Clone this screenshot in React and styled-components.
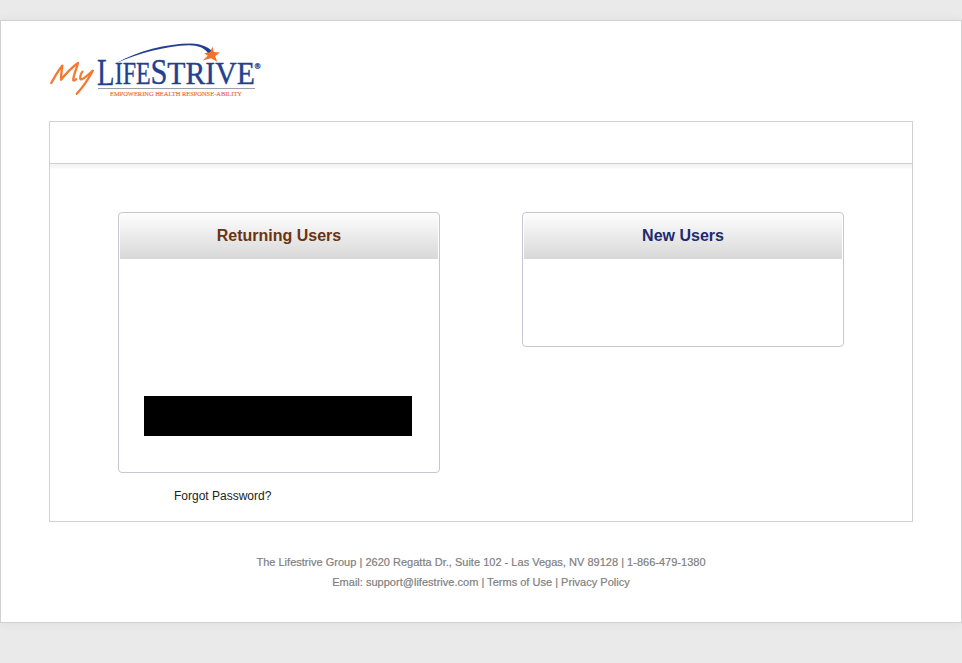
import React from "react";
import styled, { createGlobalStyle } from "styled-components";

const GlobalStyle = createGlobalStyle`
  *, *::before, *::after { box-sizing: border-box; }
  body {
    margin: 0;
    background: #eaeaea;
    font-family: "Liberation Sans", Arial, sans-serif;
  }
`;

const Page = styled.div`
  height: 663px;
  padding-top: 20px;
  overflow: hidden;
`;

const Sheet = styled.div`
  height: 603px;
  padding: 0 48px;
  background: #fff;
  border: 1px solid #d2d2d2;
  box-shadow: 0 0 10px rgba(0, 0, 0, 0.06);
`;

const Header = styled.header`
  height: 100px;
  padding-top: 14px;
`;

const LogoMark = styled.svg`
  display: block;
  width: 220px;
  height: 70px;
`;

const Panel = styled.main`
  height: 401px;
  border: 1px solid #d0d0d1;
`;

const PanelBar = styled.div`
  height: 42px;
  border-bottom: 1px solid #cfcfd0;
`;

const Columns = styled.div`
  display: flex;
  align-items: flex-start;
  gap: 82px;
  padding: 48px 68px 0;
  background: linear-gradient(#f1f1f1, #f9f9f9 4px, #fff 5px) no-repeat;
`;

const Column = styled.section`
  width: 322px;
`;

const Card = styled.div`
  height: ${(p) => p.$height}px;
  padding: 1px;
  border: 1px solid #c6c6d0;
  border-radius: 4px;
`;

const CardTitle = styled.h2`
  height: 45px;
  margin: 0;
  background: linear-gradient(#fdfdfd, #d8d8d8);
  color: ${(p) => p.$color};
  font-size: 16px;
  line-height: 43px;
  text-align: center;
`;

const BlackBar = styled.div`
  width: 268px;
  height: 40px;
  margin: 137px 0 0 24px;
  background: #000;
`;

const ForgotLink = styled.a`
  display: block;
  width: fit-content;
  margin: 15px 0 0 56px;
  color: #222;
  font-size: 12px;
  line-height: 16px;
`;

const Footer = styled.footer`
  padding-top: 30px;
  color: #808080;
  font-size: 11px;
  line-height: 20px;
  letter-spacing: 0.015px;
  text-align: center;
  -webkit-text-stroke: 0.2px #808080;
`;

const FooterLine = styled.div`
  white-space: nowrap;
`;

function Logo() {
  return (
    <LogoMark viewBox="49 35 220 70" role="img" aria-label="My LifeStrive">
      <g fill="none" stroke="#f47a30" strokeLinecap="round" strokeLinejoin="round">
        <path strokeWidth="2.3" d="M51.2 83 C54.5 77.5 57.5 71.5 62.4 65.6 C61.6 71 61 75.5 61 79.8 C66 73.5 71.6 67.5 78 63 C76.8 68.5 73.6 74.5 73.2 80 C73.4 81 74.8 80.4 76.2 79.2" />
        <path strokeWidth="2.3" d="M82.4 71.6 C80.6 74 79.4 78.2 80.8 79.4 C83.4 79.6 89 74 92.9 70.6 C88.6 79 82.4 87.8 76.8 93.8" />
      </g>
      <path fill="#243f90" d="M116 63.3 C138 50.8 166 43.6 191 43.5 C202 43.8 209.5 47.8 212.5 51.6 L208.2 53.5 C205 48 198 45.5 189 45.3 C165 46.2 139 53.2 116 63.3 Z" />
      <path fill="#f4712b" d="M212.5 46.5 L213.8 51.9 L220 52.4 L215.2 55.9 L217.2 61.7 L211 58.2 L202.6 60.4 L207.7 55.8 L204.3 53.2 L210.2 52.2 Z" />
      <g fill="#243f90" stroke="#243f90" strokeWidth="0.35" fontFamily="'Liberation Serif', 'Times New Roman', serif">
        <text x="97" y="84.6" fontSize="37" textLength="17.5" lengthAdjust="spacingAndGlyphs">L</text>
        <text x="114.7" y="84.4" fontSize="30.5" textLength="36" lengthAdjust="spacingAndGlyphs">IFE</text>
        <text x="150.4" y="84.4" fontSize="36.5" textLength="17" lengthAdjust="spacingAndGlyphs">S</text>
        <text x="167.3" y="84.4" fontSize="30.5" textLength="87.5" lengthAdjust="spacingAndGlyphs">TRIVE</text>
      </g>
      <text x="254.4" y="69.3" fill="#243f90" stroke="#243f90" strokeWidth="0.3" fontSize="8" fontWeight="bold" fontFamily="'Liberation Serif', serif">®</text>
      <path stroke="#9b9fa8" strokeWidth="1" d="M98 88.5H255" />
      <text x="110" y="96.2" fill="#ed6b36" stroke="#ed6b36" strokeWidth="0.15" fontSize="6.6" fontFamily="'Liberation Serif', 'Times New Roman', serif" textLength="132" lengthAdjust="spacingAndGlyphs">EMPOWERING HEALTH RESPONSE-ABILITY</text>
    </LogoMark>
  );
}

export default function App() {
  return (
    <>
      <GlobalStyle />
      <Page>
        <Sheet>
          <Header>
            <Logo />
          </Header>
          <Panel>
            <PanelBar />
            <Columns>
              <Column>
                <Card $height={261}>
                  <CardTitle $color="#6b3413">Returning Users</CardTitle>
                  <BlackBar />
                </Card>
                <ForgotLink>Forgot Password?</ForgotLink>
              </Column>
              <Column>
                <Card $height={135}>
                  <CardTitle $color="#1e2a70">New Users</CardTitle>
                </Card>
              </Column>
            </Columns>
          </Panel>
          <Footer>
            <FooterLine>The Lifestrive Group | 2620 Regatta Dr., Suite 102 - Las Vegas, NV 89128 | 1-866-479-1380</FooterLine>
            <FooterLine>Email: support@lifestrive.com | Terms of Use | Privacy Policy</FooterLine>
          </Footer>
        </Sheet>
      </Page>
    </>
  );
}
